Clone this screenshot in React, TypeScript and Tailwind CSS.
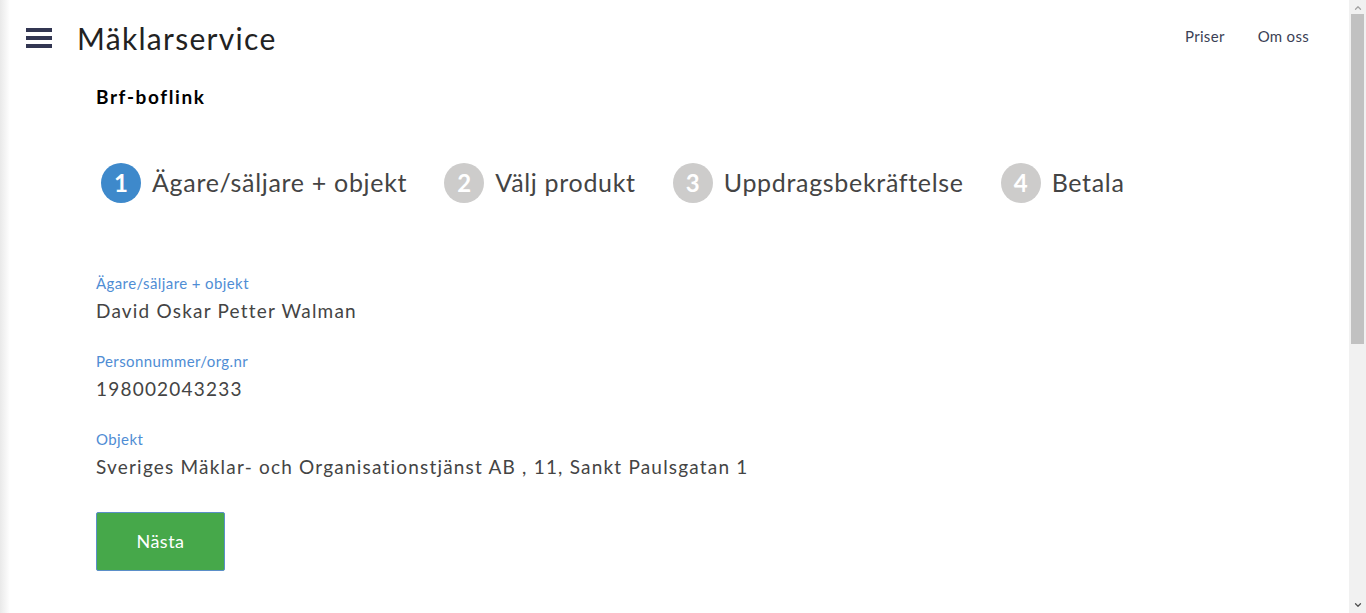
import { ChevronDown, ChevronUp } from "lucide-react";

const steps = [
  { n: 1, label: "Ägare/säljare + objekt", active: true },
  { n: 2, label: "Välj produkt", active: false },
  { n: 3, label: "Uppdragsbekräftelse", active: false },
  { n: 4, label: "Betala", active: false },
];

const fields = [
  { label: "Ägare/säljare + objekt", value: "David Oskar Petter Walman" },
  { label: "Personnummer/org.nr", value: "198002043233" },
  { label: "Objekt", value: "Sveriges Mäklar- och Organisationstjänst AB , 11, Sankt Paulsgatan 1" },
];

const App = () => {
  return (
    <div className="flex h-[613px] w-full overflow-hidden bg-white font-['Lato',sans-serif] text-[#444]">
      <div className="w-[10px] shrink-0 bg-gradient-to-r from-[#e9e9e9] to-white" />
      <div className="flex-1 min-w-0">
        {/* header */}
        <div className="flex items-center h-[76px] pl-[16px] pr-[40px]">
          <div className="flex flex-col gap-[4px] w-[26px]">
            <span className="block h-[4px] bg-[#323652]" />
            <span className="block h-[4px] bg-[#323652]" />
            <span className="block h-[4px] bg-[#323652]" />
          </div>
          <h1 className="ml-[25px] text-[30px] tracking-[1.3px] text-[#222] leading-none">Mäklarservice</h1>
          <nav className="ml-auto flex gap-[33px] text-[15px] tracking-[0.3px] text-[#3b3f55] -mt-[4px]">
            <a>Priser</a>
            <a>Om oss</a>
          </nav>
        </div>

        <div className="pl-[86px]">
          <div className="text-[19px] font-bold text-black mt-[11px] leading-none tracking-[1.6px]">Brf-boflink</div>

          {/* steps */}
          <div className="flex items-center gap-[37px] mt-[57px] ml-[5px]">
            {steps.map((s) => (
              <div key={s.n} className="flex items-center gap-[11px]">
                <div
                  className={
                    s.active
                      ? "w-[40px] h-[40px] rounded-full bg-[#3e89cb] text-white flex items-center justify-center text-[24px] font-bold"
                      : "w-[40px] h-[40px] rounded-full bg-[#cdcccb] text-white flex items-center justify-center text-[24px] font-bold"
                  }
                >
                  {s.n}
                </div>
                <span className="text-[25px] text-[#444] tracking-[0.68px]">{s.label}</span>
              </div>
            ))}
          </div>

          {/* fields */}
          <div className="flex flex-col gap-[27px] mt-[70px]">
            {fields.map((f) => (
              <div key={f.label}>
                <div className="text-[15px] text-[#4f8dd4] leading-[20px] tracking-[0.4px]">{f.label}</div>
                <div className="text-[19px] text-[#444] leading-[26px] mt-[5px] tracking-[1.2px]">{f.value}</div>
              </div>
            ))}
          </div>

          <button className="mt-[32px] w-[129px] h-[59px] bg-[#46a84a] border border-[#5b8fc8] rounded-[2px] text-white text-[18px] tracking-[0.5px]">
            Nästa
          </button>
        </div>
      </div>

      {/* scrollbar */}
      <div className="w-[17px] shrink-0 bg-[#f1f1f1] flex flex-col items-center">
        <ChevronUp size={10} className="text-[#a3a3a3] mt-[3px]" strokeWidth={3} />
        <div className="w-[13px] h-[330px] bg-[#c1c1c1] mt-[1px]" />
        <div className="flex-1" />
        <ChevronDown size={10} className="text-[#505050] mb-[3px]" strokeWidth={3} />
      </div>
    </div>
  );
};

export default App;
